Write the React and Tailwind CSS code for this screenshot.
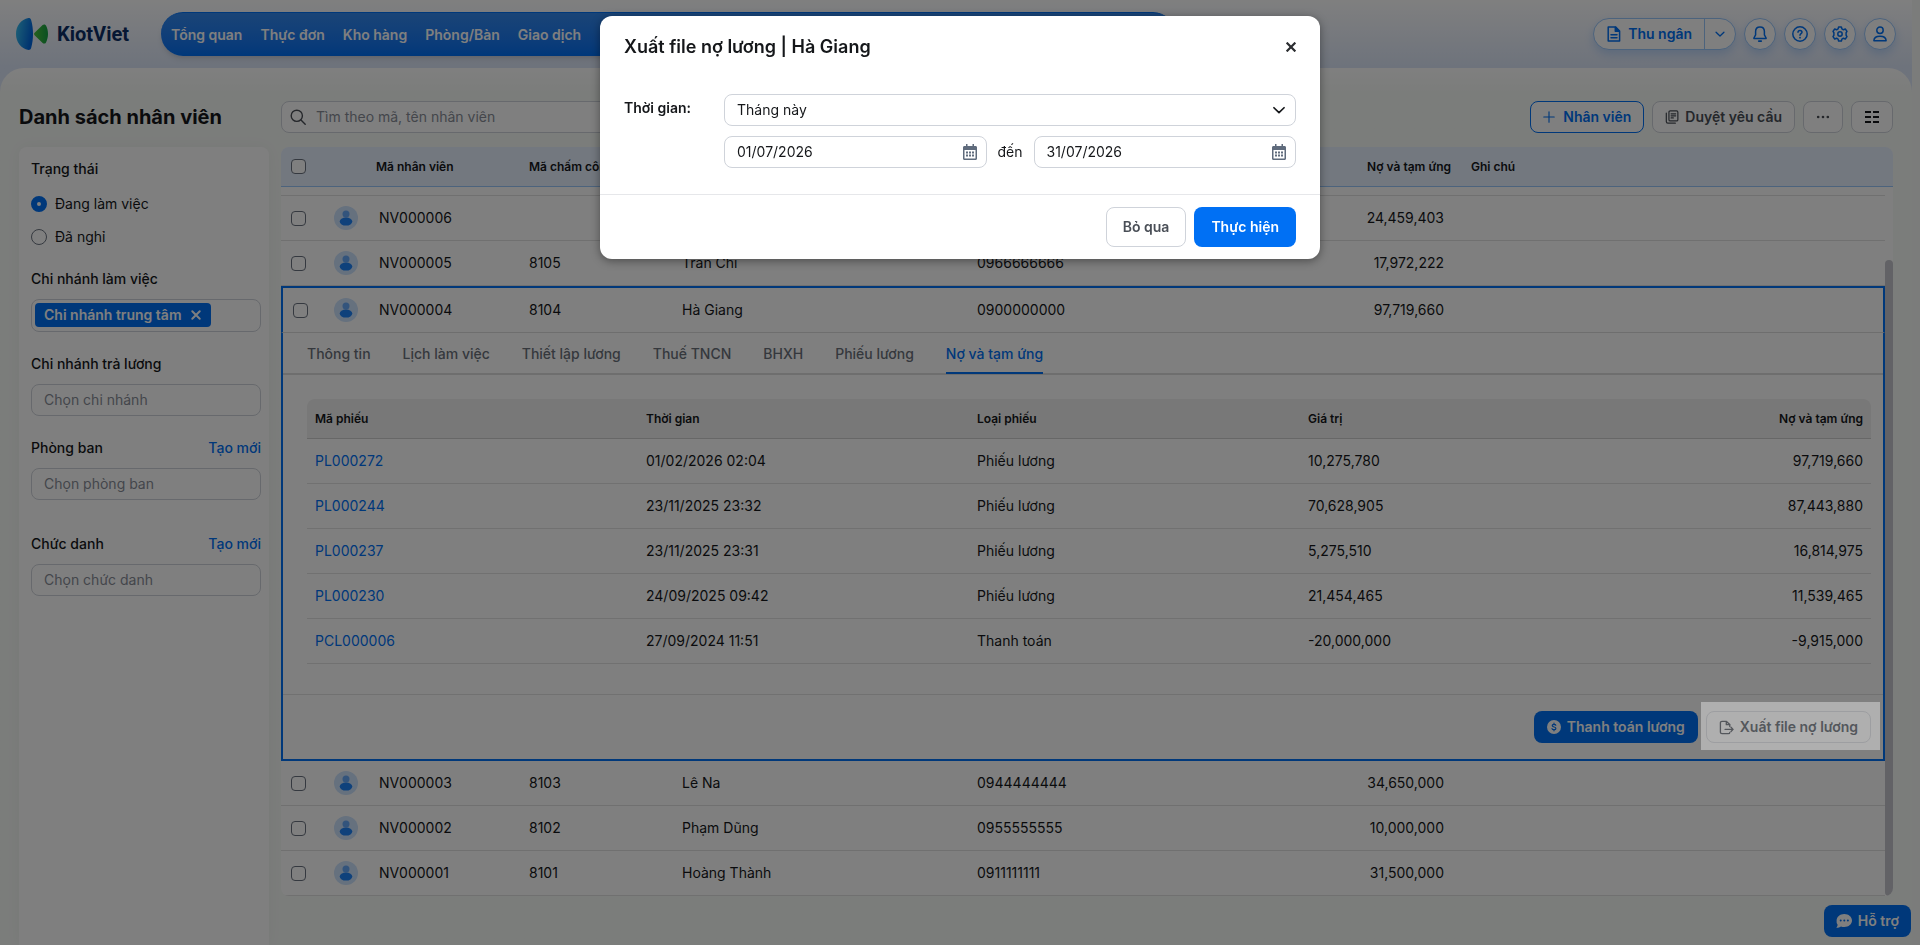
import React, { useState } from 'react';

const NAV_ITEMS = ['Tổng quan', 'Thực đơn', 'Kho hàng', 'Phòng/Bàn', 'Giao dịch'];

const TABS = ['Thông tin', 'Lịch làm việc', 'Thiết lập lương', 'Thuế TNCN', 'BHXH', 'Phiếu lương', 'Nợ và tạm ứng'];

const EMPLOYEES = [
  { code: 'NV000006', clock: '', name: '', phone: '', debt: '24,459,403' },
  { code: 'NV000005', clock: '8105', name: 'Trần Chi', phone: '0966666666', debt: '17,972,222' },
  { code: 'NV000004', clock: '8104', name: 'Hà Giang', phone: '0900000000', debt: '97,719,660' },
  { code: 'NV000003', clock: '8103', name: 'Lê Na', phone: '0944444444', debt: '34,650,000' },
  { code: 'NV000002', clock: '8102', name: 'Phạm Dũng', phone: '0955555555', debt: '10,000,000' },
  { code: 'NV000001', clock: '8101', name: 'Hoàng Thành', phone: '0911111111', debt: '31,500,000' },
];

const VOUCHERS = [
  { code: 'PL000272', time: '01/02/2026 02:04', type: 'Phiếu lương', value: '10,275,780', debt: '97,719,660' },
  { code: 'PL000244', time: '23/11/2025 23:32', type: 'Phiếu lương', value: '70,628,905', debt: '87,443,880' },
  { code: 'PL000237', time: '23/11/2025 23:31', type: 'Phiếu lương', value: '5,275,510', debt: '16,814,975' },
  { code: 'PL000230', time: '24/09/2025 09:42', type: 'Phiếu lương', value: '21,454,465', debt: '11,539,465' },
  { code: 'PCL000006', time: '27/09/2024 11:51', type: 'Thanh toán', value: '-20,000,000', debt: '-9,915,000' },
];

/* ---------- icons ---------- */

const Svg = ({ size = 16, children, ...rest }) => (
  <svg
    width={size}
    height={size}
    viewBox="0 0 16 16"
    fill="none"
    stroke="currentColor"
    strokeWidth="1.5"
    strokeLinecap="round"
    strokeLinejoin="round"
    aria-hidden="true"
    className="shrink-0"
    {...rest}
  >
    {children}
  </svg>
);

const LogoMark = () => (
  <svg width="32" height="32" viewBox="0 0 32 32" aria-hidden="true">
    <defs>
      <linearGradient id="logoBlue" x1="0" y1="0" x2="1" y2="0.3">
        <stop offset="0" stopColor="#3cc4ee" />
        <stop offset="1" stopColor="#0066e0" />
      </linearGradient>
      <linearGradient id="logoGreen" x1="0" y1="0" x2="1" y2="0">
        <stop offset="0" stopColor="#4cc23a" />
        <stop offset="1" stopColor="#14a045" />
      </linearGradient>
    </defs>
    <path d="M12.5 0C5 1.500 0 8 0 16s5 14.500 12.500 16c1.500 0 2.300-.6 2.700-2.200C16.400 25.500 17 21 17 16s-.6-9.500-1.800-13.800C14.800.6 14 0 12.500 0Z" fill="url(#logoBlue)" />
    <path d="M18.600 14.800 26.600 7c1-.9 2.700-.8 3.400.6 1.300 2.600 2 5.400 2 8.400s-.7 5.800-2 8.400c-.7 1.400-2.400 1.500-3.400.6l-8-7.800c-.7-.7-.7-1.700 0-2.400Z" fill="url(#logoGreen)" />
  </svg>
);

const FileIcon = () => (
  <Svg>
    <path d="M2.200.9h7.300l4.100 4.100v10.100H2.200Z" />
    <path d="M9.300 1.200v4h4Z" fill="currentColor" />
    <path d="M5 8.700h6M5 11.700h6" />
  </Svg>
);

const ChevronIcon = ({ size = 16 }) => (
  <Svg size={size}>
    <path d="m3.500 6 4.500 4.300L12.500 6" />
  </Svg>
);

const BellIcon = () => (
  <Svg>
    <path d="M8 1C5.300 1 3.600 3 3.600 5.600v3.300L1.900 12v.6h12.200V12l-1.700-3.100V5.600C12.400 3 10.700 1 8 1Z" />
    <path d="M6.800 15.100h2.400" strokeWidth="1.800" />
  </Svg>
);

const HelpIcon = () => (
  <Svg>
    <circle cx="8" cy="8" r="7.200" />
    <path d="M6 6.300c0-1.100.9-1.900 2-1.900s2 .7 2 1.800c0 1.400-2 1.500-2 3" />
    <path d="M8 11.600v.1" strokeWidth="1.800" />
  </Svg>
);

const GearIcon = () => (
  <Svg>
    <path d="M6.600 1h2.800l.5 1.900 1.500.9 1.900-.8L15 5.400l-.9 1.300v2.600l.9 1.300-1.700 2.400-1.900-.8-1.500.9L9.400 15H6.600l-.5-1.900-1.500-.9-1.900.8L1 10.600l.9-1.300V6.700L1 5.400 2.700 3l1.900.8 1.500-.9Z" />
    <circle cx="8" cy="8" r="2.200" />
  </Svg>
);

const UserIcon = () => (
  <Svg>
    <circle cx="8" cy="4.200" r="3.200" />
    <path d="M1.900 14.800c0-2.900 2.300-4.600 6.100-4.600s6.100 1.700 6.100 4.600Z" />
  </Svg>
);

const SearchIcon = () => (
  <Svg strokeWidth="1.400">
    <circle cx="6.800" cy="6.800" r="5.600" />
    <path d="m11 11 4.200 4.200" />
  </Svg>
);

const RequestIcon = () => (
  <Svg size={14} strokeWidth="1.400">
    <rect x="4.500" y="1" width="10.200" height="11.500" rx="1.500" />
    <path d="M7 4.300h5.200M7 6.700h5.200M7 9.100h2.500" />
    <path d="M1.500 3.500v9.700c0 1 .8 1.800 1.800 1.800h8.500" />
  </Svg>
);

const ColumnsIcon = () => (
  <svg width="16" height="14" viewBox="0 0 16 14" fill="currentColor" aria-hidden="true">
    {[1, 6, 11].map((y) => (
      <g key={y}>
        <rect x="1" y={y} width="6" height="2" />
        <rect x="9" y={y} width="6" height="2" />
      </g>
    ))}
  </svg>
);

const CalendarIcon = () => (
  <svg width="16" height="16" viewBox="0 0 16 16" fill="currentColor" aria-hidden="true">
    <path
      fillRule="evenodd"
      d="M4 0h1.500v2h5V0H12v2h1.500c.8 0 1.500.6 1.500 1.400v11.100c0 .9-.6 1.500-1.500 1.500h-11C1.600 16 1 15.400 1 14.500V3.400C1 2.600 1.700 2 2.500 2H4ZM2.500 6v8.500h11V6Z"
    />
    {[7.500, 10.500].map((y) =>
      [4, 7, 10].map((x) => <rect key={`${x}-${y}`} x={x} y={y} width="2" height="2" />)
    )}
  </svg>
);

const CoinIcon = () => (
  <svg width="14" height="14" viewBox="0 0 14 14" aria-hidden="true">
    <circle cx="7" cy="7" r="7" fill="#fff" />
    <path
      d="M8.800 5.200C8.600 4.600 7.900 4.300 7 4.300c-1 0-1.800.5-1.800 1.300 0 1.900 3.700.9 3.700 2.800 0 .8-.9 1.300-1.900 1.300S5.200 9.300 5 8.600M7 3.200v1M7 9.800v1"
      fill="none"
      stroke="#0070f4"
      strokeWidth="1.200"
      strokeLinecap="round"
    />
  </svg>
);

const ExportIcon = () => (
  <Svg size={15} strokeWidth="1.400">
    <path d="M11.500 7V4.800L8 1.500H3.200C2.200 1.500 1.500 2.200 1.500 3v10c0 .9.700 1.500 1.700 1.500h6.600c1 0 1.700-.6 1.700-1.300" />
    <path d="M7.800 1.700V5h3.500" />
    <path d="M6.500 10H15M12.800 7.800 15 10l-2.200 2.200" />
  </Svg>
);

const ChatIcon = () => (
  <svg width="16" height="14" viewBox="0 0 16 14" aria-hidden="true">
    <path d="M8.300 0C12.600 0 16 2.900 16 6.500S12.600 13 8.300 13c-1.200 0-2.300-.2-3.300-.6-1.300.9-3 1.500-4.700 1.400.8-.8 1.300-1.900 1.300-3A6 6 0 0 1 .6 6.500C.6 2.900 4 0 8.300 0Z" fill="#fff" />
    <circle cx="4.700" cy="6.500" r="1" fill="#0070f4" />
    <circle cx="8.300" cy="6.500" r="1" fill="#0070f4" />
    <circle cx="11.900" cy="6.500" r="1" fill="#0070f4" />
  </svg>
);

const Avatar = () => (
  <svg width="24" height="24" viewBox="0 0 24 24" aria-hidden="true" className="block">
    <circle cx="12" cy="12" r="12" fill="#cce2fd" />
    <circle cx="12" cy="8" r="3.500" fill="#66a9f8" />
    <ellipse cx="12" cy="15.600" rx="6.300" ry="4" fill="#1f83f6" />
  </svg>
);

/* ---------- small controls ---------- */

const Checkbox = ({ label }) => (
  <input
    type="checkbox"
    aria-label={label}
    className="block size-[15px] appearance-none rounded-sm border border-[#6b7380] bg-white"
  />
);

const IconButton = ({ label, children }) => (
  <button
    type="button"
    aria-label={label}
    className="flex size-8 items-center justify-center rounded-full border border-[#99c6fb] bg-white text-[#0070f4] shadow-[0_4px_10px_rgba(0,112,244,0.2)]"
  >
    {children}
  </button>
);

const FilterField = ({ id, label, placeholder, canCreate, className }) => (
  <div className={className}>
    <div className="flex h-5 items-center justify-between">
      <label htmlFor={id} className="font-medium">{label}</label>
      {canCreate && <a href="#" className="font-medium text-[#0070f4]">Tạo mới</a>}
    </div>
    <input
      id={id}
      type="text"
      placeholder={placeholder}
      className="mt-2.5 h-8 w-full rounded-lg border border-[#cfd3da] bg-white px-3 pb-0.5 placeholder-[#888d97] outline-none"
    />
  </div>
);

const DateField = ({ label, defaultValue }) => (
  <div className="relative flex-1">
    <input
      type="text"
      aria-label={label}
      defaultValue={defaultValue}
      className="h-8 w-full rounded-lg border border-[#cfd3da] bg-white pr-9 pb-0.5 pl-3 outline-none"
    />
    <span className="pointer-events-none absolute inset-y-0 right-[9px] flex items-center text-[#5f6b7c]">
      <CalendarIcon />
    </span>
  </div>
);

/* ---------- page parts ---------- */

const Header = () => (
  <header className="flex h-17 items-center justify-between px-4">
    <div className="flex items-center">
      <a href="#" className="flex items-center gap-[9px] font-['Roboto',sans-serif] text-xl font-bold text-[#0c2f66]">
        <LogoMark />
        KiotViet
      </a>
      <nav className="ml-8 flex h-11 w-[1014px] items-center rounded-full border-t border-[#0070f4] bg-linear-to-b from-[#3489ee] to-[#0070f4] px-px shadow-md">
        {NAV_ITEMS.map((item) => (
          <a key={item} href="#" className="px-[9px] font-semibold text-white">
            {item}
          </a>
        ))}
      </nav>
    </div>
    <div className="flex items-center gap-2">
      <div className="flex h-8 rounded-full border border-[#99c6fb] bg-white font-semibold text-[#0070f4] shadow-[0_4px_10px_rgba(0,112,244,0.2)]">
        <button type="button" className="flex items-center gap-1.5 border-r border-[#99c6fb] px-3">
          <FileIcon />
          Thu ngân
        </button>
        <button type="button" aria-label="Mở danh sách" className="flex w-[30px] items-center justify-center">
          <ChevronIcon size={14} />
        </button>
      </div>
      <IconButton label="Thông báo"><BellIcon /></IconButton>
      <IconButton label="Trợ giúp"><HelpIcon /></IconButton>
      <IconButton label="Thiết lập"><GearIcon /></IconButton>
      <IconButton label="Tài khoản"><UserIcon /></IconButton>
    </div>
  </header>
);

const Sidebar = () => (
  <aside className="w-[250px] shrink-0 rounded-t-lg bg-white px-3 pt-3 pr-2 shadow-[0_0_16px_rgba(0,0,0,0.04)]">
    <fieldset>
      <legend className="h-5 leading-5 font-medium">Trạng thái</legend>
      <div className="mt-2">
        <label className="flex h-[33px] items-center gap-2">
          <input
            type="radio"
            name="status"
            defaultChecked
            className="size-4 appearance-none rounded-full border border-[#6b7380] checked:border-[6px] checked:border-[#0070f4]"
          />
          Đang làm việc
        </label>
        <label className="flex h-[33px] items-center gap-2">
          <input
            type="radio"
            name="status"
            className="size-4 appearance-none rounded-full border border-[#6b7380] checked:border-[6px] checked:border-[#0070f4]"
          />
          Đã nghỉ
        </label>
      </div>
    </fieldset>

    <div className="mt-4">
      <p className="h-5 leading-5 font-medium">Chi nhánh làm việc</p>
      <div className="mt-2.5 flex h-[33px] items-start rounded-lg border border-[#cfd3da] p-[3px]">
        <span className="flex h-6 items-center gap-2 rounded-sm bg-[#0070f4] px-[9px] font-semibold text-white">
          Chi nhánh trung tâm
          <button type="button" aria-label="Bỏ chọn">
            <Svg size={12} strokeWidth="2.600"><path d="m3 3 10 10M13 3 3 13" /></Svg>
          </button>
        </span>
      </div>
    </div>

    <FilterField id="pay-branch" label="Chi nhánh trả lương" placeholder="Chọn chi nhánh" className="mt-[22px]" />
    <FilterField id="department" label="Phòng ban" placeholder="Chọn phòng ban" canCreate className="mt-[22px]" />
    <FilterField id="position" label="Chức danh" placeholder="Chọn chức danh" canCreate className="mt-[34px]" />
  </aside>
);

const VoucherTable = () => (
  <table className="w-full table-fixed border-separate border-spacing-0 text-left">
    <thead>
      <tr className="h-10 text-xs">
        <th className="w-[331px] rounded-tl-lg border-b border-[#cfcfcf] bg-[#f0f0f0] px-2 font-semibold">Mã phiếu</th>
        <th className="w-[331px] border-b border-[#cfcfcf] bg-[#f0f0f0] px-2 font-semibold">Thời gian</th>
        <th className="w-[331px] border-b border-[#cfcfcf] bg-[#f0f0f0] px-2 font-semibold">Loại phiếu</th>
        <th className="w-[331px] border-b border-[#cfcfcf] bg-[#f0f0f0] px-2 font-semibold">Giá trị</th>
        <th className="rounded-tr-lg border-b border-[#cfcfcf] bg-[#f0f0f0] px-2 text-right font-semibold">Nợ và tạm ứng</th>
      </tr>
    </thead>
    <tbody>
      {VOUCHERS.map((voucher) => (
        <tr key={voucher.code} className="h-[45px]">
          <td className="border-b border-[#e3e3e3] px-2">
            <a href="#" className="text-[#0070f4]">{voucher.code}</a>
          </td>
          <td className="border-b border-[#e3e3e3] px-2">{voucher.time}</td>
          <td className="border-b border-[#e3e3e3] px-2">{voucher.type}</td>
          <td className="border-b border-[#e3e3e3] px-2">{voucher.value}</td>
          <td className="border-b border-[#e3e3e3] px-2 text-right">{voucher.debt}</td>
        </tr>
      ))}
    </tbody>
  </table>
);

const EmployeeDetail = () => {
  const [activeTab, setActiveTab] = useState('Nợ và tạm ứng');

  return (
    <>
      <div role="tablist" className="flex h-[42px] gap-8 border-b-2 border-[#dddddd] pl-6">
        {TABS.map((tab) => (
          <button
            key={tab}
            type="button"
            role="tab"
            aria-selected={tab === activeTab}
            onClick={() => setActiveTab(tab)}
            className={`h-[41px] border-b-2 pt-0.5 font-medium ${
              tab === activeTab ? 'border-[#0070f4] text-[#0070f4]' : 'border-transparent text-[#6b717b]'
            }`}
          >
            {tab}
          </button>
        ))}
      </div>
      <div className="pt-6 pr-3 pb-[30px] pl-6">
        <VoucherTable />
      </div>
      <div className="flex justify-end gap-2 border-t border-[#e3e3e3] py-4 pr-3">
        <button type="button" className="flex h-8 items-center gap-1.5 rounded-lg bg-[#0070f4] px-[13px] font-semibold text-white">
          <CoinIcon />
          Thanh toán lương
        </button>
        {/* stays above the dimmed page */}
        <div className="relative z-50">
          <span className="pointer-events-none absolute -top-[9px] -right-[9px] -bottom-[7px] -left-[5px] bg-[#afafaf]" />
          <button type="button" className="relative flex h-8 items-center gap-1.5 rounded-lg border border-[#9d9ea1] px-3 font-semibold text-[#54575c]">
            <ExportIcon />
            Xuất file nợ lương
          </button>
        </div>
      </div>
    </>
  );
};

const EmployeeRow = ({ employee, expanded }) => {
  const cell = expanded
    ? 'border-b border-b-[#dddddd] border-t-2 border-t-[#0070f4]'
    : 'border-b border-b-[#e0e0e0]';

  return (
    <>
      <tr className={expanded ? 'h-[47px]' : 'h-[45px]'}>
        <td className={`${cell} pl-2.5 ${expanded ? 'border-l-2 border-l-[#0070f4]' : ''}`}>
          <Checkbox label={`Chọn ${employee.code}`} />
        </td>
        <td className={`${cell} pl-[3px]`}><Avatar /></td>
        <td className={`${cell} px-2`}>{employee.code}</td>
        <td className={`${cell} px-2`}>{employee.clock}</td>
        <td className={`${cell} px-2`}>{employee.name}</td>
        <td className={`${cell} px-2`}>{employee.phone}</td>
        <td className={`${cell} pr-[7px] text-right`}>{employee.debt}</td>
        <td className={`${cell} ${expanded ? 'border-r-2 border-r-[#0070f4]' : ''}`} />
      </tr>
      {expanded && (
        <tr>
          <td colSpan={8} className="border-x-2 border-b-2 border-[#0070f4] p-0">
            <EmployeeDetail />
          </td>
        </tr>
      )}
    </>
  );
};

const EmployeeTable = () => (
  <div className="flex overflow-hidden rounded-lg bg-white">
    <table className="w-full table-fixed border-separate border-spacing-0 text-left">
      <thead>
        <tr className="h-10 text-xs">
          <th className="w-[50px] border-b border-[#99c6fb] bg-[#e6f0ff] pl-2.5">
            <Checkbox label="Chọn tất cả" />
          </th>
          <th className="w-10 border-b border-[#99c6fb] bg-[#e6f0ff]" />
          <th className="w-[150px] border-b border-[#99c6fb] bg-[#e6f0ff] pl-[5px] font-semibold">Mã nhân viên</th>
          <th className="w-[153px] border-b border-[#99c6fb] bg-[#e6f0ff] px-2 font-semibold">Mã chấm công</th>
          <th className="w-[295px] border-b border-[#99c6fb] bg-[#e6f0ff] px-2 font-semibold">Tên nhân viên</th>
          <th className="w-[200px] border-b border-[#99c6fb] bg-[#e6f0ff] px-2 font-semibold">Số điện thoại</th>
          <th className="w-[282px] border-b border-[#99c6fb] bg-[#e6f0ff] text-right font-semibold">Nợ và tạm ứng</th>
          <th className="border-b border-[#99c6fb] bg-[#e6f0ff] pl-5 font-semibold">Ghi chú</th>
        </tr>
      </thead>
      <tbody>
        <tr className="h-[9px]">
          <td colSpan={8} className="border-b border-[#e0e0e0] p-0" />
        </tr>
        {EMPLOYEES.map((employee) => (
          <EmployeeRow key={employee.code} employee={employee} expanded={employee.code === 'NV000004'} />
        ))}
      </tbody>
    </table>
    <div className="flex w-2 shrink-0 flex-col">
      <div className="h-10 border-b border-[#99c6fb] bg-[#e6f0ff]" />
      <div className="mt-[73px] flex-1 rounded-full bg-[#c4c5cc]" />
    </div>
  </div>
);

const Toolbar = () => (
  <div className="flex h-8 items-center justify-between">
    <label className="flex h-8 w-[400px] items-center gap-2.5 rounded-lg border border-[#cfd3da] bg-white px-2 text-[#4a4f57]">
      <SearchIcon />
      <input
        type="search"
        aria-label="Tìm nhân viên"
        placeholder="Tìm theo mã, tên nhân viên"
        className="min-w-0 flex-1 placeholder-[#888d97] outline-none"
      />
    </label>
    <div className="flex gap-2 font-semibold text-[#4a4f57]">
      <button type="button" className="flex h-8 items-center gap-2 rounded-lg border border-[#0070f4] bg-white px-3 text-[#0070f4]">
        <Svg size={12}><path d="M8 1v14M1 8h14" /></Svg>
        Nhân viên
      </button>
      <button type="button" className="flex h-8 items-center gap-1.5 rounded-lg border border-[#cfd3da] bg-white px-3">
        <RequestIcon />
        Duyệt yêu cầu
      </button>
      <button type="button" aria-label="Thêm" className="flex h-8 w-10 items-center justify-center rounded-lg border border-[#cfd3da] bg-white">
        <Svg size={14} fill="currentColor" stroke="none">
          <circle cx="2.500" cy="8" r="1.500" />
          <circle cx="8" cy="8" r="1.500" />
          <circle cx="13.500" cy="8" r="1.500" />
        </Svg>
      </button>
      <button type="button" aria-label="Cột hiển thị" className="flex h-8 w-[42px] items-center justify-center rounded-lg border border-[#cfd3da] bg-white text-[#15171a]">
        <ColumnsIcon />
      </button>
    </div>
  </div>
);

const ExportModal = ({ onClose }) => (
  <div className="fixed inset-0 z-60 flex items-start justify-center pt-4">
    <div role="dialog" aria-labelledby="export-title" className="w-full max-w-[720px] rounded-xl bg-white shadow-[0_2px_10px_rgba(0,0,0,0.4)]">
      <div className="flex h-[62px] items-center justify-between px-6">
        <h2 id="export-title" className="text-lg font-semibold">Xuất file nợ lương | Hà Giang</h2>
        <button type="button" aria-label="Đóng" onClick={onClose} className="text-[#2b2d30]">
          <Svg size={10} strokeWidth="3.600" strokeLinecap="butt"><path d="m1 1 14 14M15 1 1 15" /></Svg>
        </button>
      </div>
      <div className="flex px-6 pt-4 pb-[26px]">
        <label htmlFor="range" className="w-25 shrink-0 pt-1 leading-5 font-semibold">Thời gian:</label>
        <div className="flex-1">
          <div className="relative">
            <select id="range" className="h-8 w-full appearance-none rounded-lg border border-[#cfd3da] bg-white px-3 outline-none">
              <option>Tháng này</option>
            </select>
            <span className="pointer-events-none absolute inset-y-0 right-2 flex items-center">
              <ChevronIcon size={18} />
            </span>
          </div>
          <div className="mt-2.5 flex items-center gap-[11px]">
            <DateField label="Từ ngày" defaultValue="01/07/2026" />
            đến
            <DateField label="Đến ngày" defaultValue="31/07/2026" />
          </div>
        </div>
      </div>
      <div className="flex justify-end gap-2 border-t border-[#e6e7ea] px-6 py-3 font-semibold">
        <button type="button" onClick={onClose} className="h-10 rounded-lg border border-[#cfd3da] bg-white px-4 text-[#4a4f57]">
          Bỏ qua
        </button>
        <button type="button" className="h-10 rounded-lg bg-[#0070f4] px-[17px] text-white">Thực hiện</button>
      </div>
    </div>
  </div>
);

const App = () => {
  const [showExport, setShowExport] = useState(true);

  return (
    <div className="flex min-h-screen bg-[#f6f8f7] font-['Inter',sans-serif] text-sm text-[#15171a]">
      <div className="flex min-w-0 flex-1 flex-col bg-linear-to-b from-white to-[#dce6f8] to-[68px]">
        <Header />
        <main className="flex flex-1 flex-col rounded-t-3xl bg-linear-to-b from-white to-[#f7faf7] to-[24px] px-[19px] pt-[33px]">
          <div className="flex items-center gap-3">
            <h1 className="w-[250px] shrink-0 text-xl font-bold">Danh sách nhân viên</h1>
            <div className="flex-1"><Toolbar /></div>
          </div>
          <div className="mt-3.5 flex flex-1 gap-3">
            <Sidebar />
            <section className="min-w-0 flex-1">
              <EmployeeTable />
            </section>
          </div>
        </main>
      </div>
      <div className="w-2 shrink-0" />

      <button type="button" className="fixed right-[9px] bottom-2 z-30 flex h-8 items-center gap-1.5 rounded-lg bg-[#0070f4] px-3 font-semibold text-white">
        <ChatIcon />
        Hỗ trợ
      </button>

      {showExport && (
        <>
          <div className="fixed inset-0 z-40 bg-black/50" />
          <ExportModal onClose={() => setShowExport(false)} />
        </>
      )}
    </div>
  );
};

export default App;
